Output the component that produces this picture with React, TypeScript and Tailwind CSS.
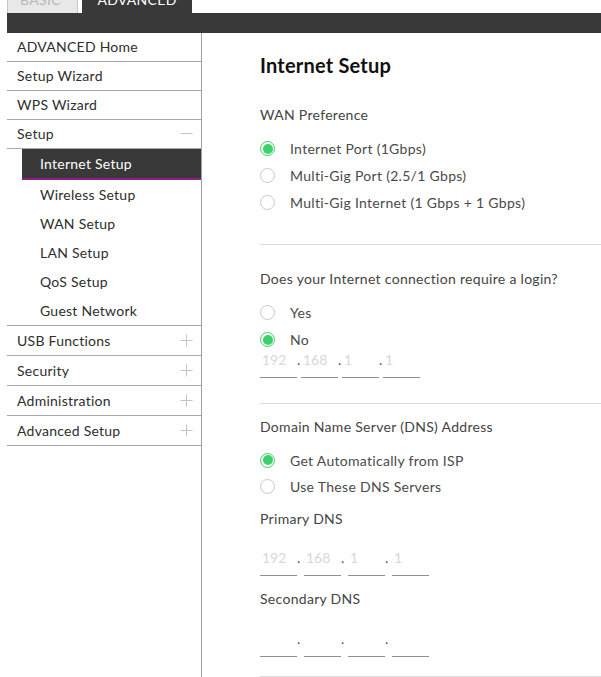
import React from "react";

const FONT = { fontFamily: "Lato, 'Open Sans', sans-serif" };

type NavItem = { label: string; icon?: "plus" | "minus" };

const TOP: NavItem[] = [
  { label: "ADVANCED Home" },
  { label: "Setup Wizard" },
  { label: "WPS Wizard" },
  { label: "Setup", icon: "minus" },
];

const SUB = ["Internet Setup", "Wireless Setup", "WAN Setup", "LAN Setup", "QoS Setup", "Guest Network"];

const BOTTOM: NavItem[] = [
  { label: "USB Functions", icon: "plus" },
  { label: "Security", icon: "plus" },
  { label: "Administration", icon: "plus" },
  { label: "Advanced Setup", icon: "plus" },
];

function Sign({ kind }: { kind: "plus" | "minus" }) {
  return (
    <svg width="13" height="13" viewBox="0 0 13 13" className="shrink-0">
      <line x1="0.5" y1="6.5" x2="12.5" y2="6.5" stroke="#c4c4c4" strokeWidth="1" />
      {kind === "plus" && <line x1="6.5" y1="0.5" x2="6.5" y2="12.5" stroke="#c4c4c4" strokeWidth="1" />}
    </svg>
  );
}

function Radio({ checked, label }: { checked?: boolean; label: string }) {
  return (
    <div className="flex items-center h-full">
      {checked ? (
        <span className="w-[15px] h-[15px] rounded-full border border-[#3fcf6b] flex items-center justify-center shrink-0">
          <span className="w-[10px] h-[10px] rounded-full bg-[#3dd06b]" />
        </span>
      ) : (
        <span className="w-[15px] h-[15px] rounded-full border border-[#c8c8c8] shrink-0" />
      )}
      <span className="ml-[15px] text-[14px] tracking-[0.3px] text-[#4a4a4a]">{label}</span>
    </div>
  );
}

function IpField({ values, gap, h }: { values: string[]; gap: number; h: string }) {
  return (
    <div className={`flex ${h}`}>
      {[0, 1, 2, 3].map((i) => (
        <React.Fragment key={i}>
          {i > 0 && (
            <span className="text-[14px] leading-[14px] text-[#555] shrink-0" style={{ width: gap }}>
              .
            </span>
          )}
          <span className="w-[37px] border-b border-[#8f8f8f] pl-[2px] text-[14px] leading-[14px] text-[#d8d8d8]">
            {values[i] ?? ""}
          </span>
        </React.Fragment>
      ))}
    </div>
  );
}

export default function App() {
  return (
    <div className="w-[601px] h-[677px] overflow-hidden bg-white pl-[7px] flex flex-col" style={FONT}>
      {/* tabs, scrolled so only their lower part shows */}
      <div className="flex h-[13px] shrink-0">
        <div className="w-[71px] h-[13px] overflow-hidden bg-[#e8e8e8] border-x border-[#c8c8c8] text-center">
          <span className="block -mt-[7px] leading-[14px] text-[14px] tracking-[0.3px] text-[#b8b8b8] pr-[4px]">BASIC</span>
        </div>
        <div className="ml-[4px] w-[110px] h-[13px] overflow-hidden bg-[#393939] text-center">
          <span className="block -mt-[7px] leading-[14px] text-[14px] tracking-[0.3px] text-white">ADVANCED</span>
        </div>
      </div>
      <div className="h-[20px] bg-[#393939] shrink-0" />

      <div className="flex flex-1 min-h-0">
        {/* sidebar */}
        <div className="w-[195px] shrink-0 border-r border-[#a0a0a0] text-[14px] tracking-[0.25px] text-[#2e2e2e]">
          {TOP.map((it) => (
            <div key={it.label} className="h-[29px] border-b border-[#a8a8a8] flex items-center justify-between pl-[10px] pr-[8px] pb-[1px]">
              <span>{it.label}</span>
              {it.icon && <Sign kind={it.icon} />}
            </div>
          ))}
          <div className="pl-[15px]">
            {SUB.map((s, i) =>
              i === 0 ? (
                <div key={s} className="h-[31px] bg-[#393939] border-b-2 border-[#8e1f8a] flex items-center pl-[18px] text-white">
                  {s}
                </div>
              ) : (
                <div key={s} className="h-[29px] flex items-center pl-[18px]">
                  {s}
                </div>
              )
            )}
          </div>
          <div className="border-t border-[#a8a8a8]">
            {BOTTOM.map((it) => (
              <div key={it.label} className="h-[30px] border-b border-[#a8a8a8] flex items-center justify-between pl-[10px] pr-[8px] pb-[1px]">
                <span>{it.label}</span>
                {it.icon && <Sign kind={it.icon} />}
              </div>
            ))}
          </div>
        </div>

        {/* content */}
        <div className="flex-1 pl-[58px] flex flex-col">
          <h1 className="mt-[20px] h-[24px] leading-[24px] text-[20px] tracking-[0.2px] font-bold text-[#111]">Internet Setup</h1>

          <div className="mt-[28px] h-[20px] leading-[20px] text-[14px] tracking-[0.3px] text-[#444]">WAN Preference</div>
          <div className="mt-[10px] flex flex-col">
            <div className="h-[27px]"><Radio checked label="Internet Port (1Gbps)" /></div>
            <div className="h-[27px]"><Radio label="Multi-Gig Port (2.5/1 Gbps)" /></div>
            <div className="h-[27px]"><Radio label="Multi-Gig Internet (1 Gbps + 1 Gbps)" /></div>
          </div>
          <div className="mt-[28px] border-t border-[#dcdcdc]" />

          <div className="mt-[24px] h-[20px] leading-[20px] text-[14px] tracking-[0.3px] text-[#444]">Does your Internet connection require a login?</div>
          <div className="mt-[10px] flex flex-col">
            <div className="h-[27px]"><Radio label="Yes" /></div>
            <div className="h-[27px]"><Radio checked label="No" /></div>
          </div>
          <IpField values={["192", "168", "1", "1"]} gap={4} h="h-[25px]" />
          <div className="mt-[25px] border-t border-[#dcdcdc]" />

          <div className="mt-[13px] h-[20px] leading-[20px] text-[14px] tracking-[0.3px] text-[#444]">Domain Name Server (DNS) Address</div>
          <div className="mt-[10px] flex flex-col">
            <div className="h-[26px]"><Radio checked label="Get Automatically from ISP" /></div>
            <div className="h-[26px]"><Radio label="Use These DNS Servers" /></div>
          </div>
          <div className="mt-[10px] h-[20px] leading-[20px] text-[14px] tracking-[0.3px] text-[#444]">Primary DNS</div>
          <div className="mt-[22px]">
            <IpField values={["192", "168", "1", "1"]} gap={7} h="h-[25px]" />
          </div>
          <div className="mt-[13px] h-[20px] leading-[20px] text-[14px] tracking-[0.3px] text-[#444]">Secondary DNS</div>
          <div className="mt-[23px]">
            <IpField values={[]} gap={7} h="h-[25px]" />
          </div>
          <div className="mt-[19px] border-t border-[#dcdcdc]" />
        </div>
      </div>
    </div>
  );
}
